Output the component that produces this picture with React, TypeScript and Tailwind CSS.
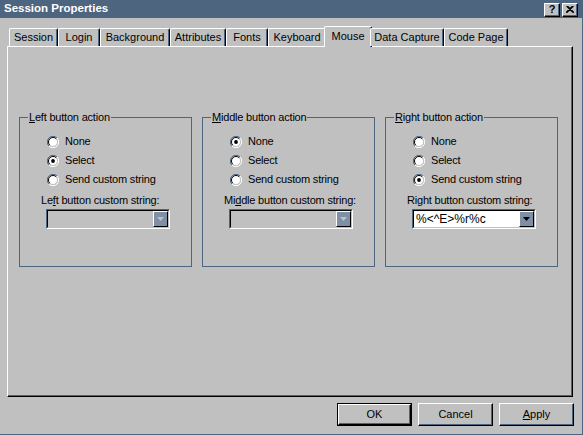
import React from "react";

const Radio = ({ checked }: { checked?: boolean }) => (
  <svg width="12" height="12" viewBox="0 0 12 12" className="shrink-0">
    <path d="M1.9 10.1 A5.8 5.8 0 0 1 10.1 1.9" fill="none" stroke="#4e6580" strokeWidth="1" />
    <path d="M10.1 1.9 A5.8 5.8 0 0 1 1.9 10.1" fill="none" stroke="#ffffff" strokeWidth="1" />
    <circle cx="6" cy="6" r="4.6" fill="#ffffff" />
    <path d="M2.8 9.2 A4.5 4.5 0 0 1 9.2 2.8" fill="none" stroke="#000000" strokeWidth="1" />
    <path d="M9.2 2.8 A4.5 4.5 0 0 1 2.8 9.2" fill="none" stroke="#c0c0c0" strokeWidth="1" />
    {checked && <circle cx="6" cy="6" r="1.9" fill="#000000" />}
  </svg>
);

const Option = ({ label, checked }: { label: string; checked?: boolean }) => (
  <div className="flex items-center h-[19px] gap-[6px]">
    <Radio checked={checked} />
    <span className="leading-[13px]">{label}</span>
  </div>
);

const Combo = ({ value, disabled }: { value?: string; disabled?: boolean }) => (
  <div
    className={`flex w-[124px] h-[20px] border border-t-[#4e6580] border-l-[#4e6580] border-r-white border-b-white ${
      disabled ? "bg-[#c0c0c0]" : "bg-white"
    }`}
  >
    <div className="flex flex-1 border border-t-black border-l-black border-r-[#c0c0c0] border-b-[#c0c0c0]">
      <div className="flex-1 flex items-center pl-[2px] text-[12px] tracking-normal leading-none text-black">{value}</div>
      <div className="w-[15px] flex items-center justify-center border border-t-white border-l-white border-r-black border-b-black bg-[#7d90a6]">
        <svg width="7" height="4" viewBox="0 0 7 4">
          <path d="M0 0 H7 L3.5 4 Z" fill={disabled ? "#c0c0c0" : "#000000"} />
        </svg>
      </div>
    </div>
  </div>
);

const Group = ({
  title,
  options,
  checkedIndex,
  comboLabel,
  comboValue,
  disabled,
}: {
  title: React.ReactNode;
  options: string[];
  checkedIndex: number;
  comboLabel: React.ReactNode;
  comboValue?: string;
  disabled?: boolean;
}) => (
  <div className="relative h-[150px] border border-[#4e6580] tracking-[-0.2px]">
    <span className="absolute left-[8px] top-[-7px] px-[1px] bg-[#c0c0c0] leading-[13px]">{title}</span>
    <div className="flex flex-col pt-[14px]">
      <div className="flex flex-col pl-[27px]">
        {options.map((o, i) => (
          <Option key={o} label={o} checked={i === checkedIndex} />
        ))}
      </div>
      <div className="pl-[21px] mt-[3px] h-[16px] flex items-center leading-[13px]">{comboLabel}</div>
      <div className="pl-[26px] mt-[1px]">
        <Combo value={comboValue} disabled={disabled} />
      </div>
    </div>
  </div>
);

const tabs: { name: string; w: string; selected?: boolean }[] = [
  { name: "Session", w: "w-[49px]" },
  { name: "Login", w: "w-[42px]" },
  { name: "Background", w: "w-[70px]" },
  { name: "Attributes", w: "w-[56px]" },
  { name: "Fonts", w: "w-[42px]" },
  { name: "Keyboard", w: "w-[58px]" },
  { name: "Mouse", w: "w-[48px]", selected: true },
  { name: "Data Capture", w: "w-[74px]" },
  { name: "Code Page", w: "w-[64px]" },
];

const Button = ({ children, def }: { children: React.ReactNode; def?: boolean }) => (
  <div className={`w-[75px] h-[23px] flex ${def ? "border border-black" : ""}`}>
    <div className="flex-1 flex items-center justify-center border border-t-white border-l-white border-r-black border-b-black shadow-[inset_-1px_-1px_0_#4e6580] bg-[#c0c0c0] leading-none">
      {children}
    </div>
  </div>
);

export default function App() {
  return (
    <div className="w-[583px] h-[435px] bg-[#c0c0c0] flex flex-col font-['Liberation_Sans',Arial,sans-serif] text-[11px] text-black border-b border-r border-b-[#4e6580] border-r-[#4e6580] overflow-hidden">
      <div className="h-[18px] bg-[#4e6580] flex items-center justify-between pl-[4px] pr-[4px]">
        <span className="text-white font-bold text-[11.5px] leading-none">Session Properties</span>
        <div className="flex gap-[2px] pt-[1px]">
          <div className="w-[16px] h-[14px] bg-[#c0c0c0] border border-t-white border-l-white border-r-black border-b-black shadow-[inset_-1px_-1px_0_#4e6580] flex items-center justify-center font-bold text-[11px] leading-none">
            ?
          </div>
          <div className="w-[16px] h-[14px] bg-[#c0c0c0] border border-t-white border-l-white border-r-black border-b-black shadow-[inset_-1px_-1px_0_#4e6580] flex items-center justify-center">
            <svg width="8" height="7" viewBox="0 0 8 7">
              <path d="M0.5 0 L7.5 7 M7.5 0 L0.5 7 M1.5 0 L8 6.5 M6.5 0 L0 6.5" stroke="#000" strokeWidth="1.1" />
            </svg>
          </div>
        </div>
      </div>

      <div className="relative z-10 mt-[8px] h-[20px] flex items-end pl-[9px]">
        {tabs.map((t) =>
          t.selected ? (
            <div
              key={t.name}
              className={`${t.w} h-[21px] -mx-[2px] -mb-[1px] bg-[#c0c0c0] border-t border-l border-r border-t-white border-l-white border-r-black shadow-[inset_-1px_0_0_#4e6580] rounded-t-[2px] flex items-start justify-center pt-[3px] leading-[13px]`}
            >
              {t.name}
            </div>
          ) : (
            <div
              key={t.name}
              className={`${t.w} h-[18px] bg-[#c0c0c0] border-t border-l border-r border-t-white border-l-white border-r-black shadow-[inset_-1px_0_0_#4e6580] rounded-t-[2px] flex items-center justify-center leading-[13px]`}
            >
              {t.name}
            </div>
          )
        )}
      </div>

      <div className="ml-[7px] w-[566px] h-[351px] border border-t-white border-l-white border-r-black border-b-black shadow-[inset_-1px_-1px_0_#4e6580] pl-[11px] pt-[70px]">
        <div className="grid grid-cols-[173px_173px_173px] gap-[10px]">
          <Group
            title={
              <>
                <span className="underline">L</span>eft button action
              </>
            }
            options={["None", "Select", "Send custom string"]}
            checkedIndex={1}
            comboLabel={
              <>
                Le<span className="underline">f</span>t button custom string:
              </>
            }
            disabled
          />
          <Group
            title={
              <>
                <span className="underline">M</span>iddle button action
              </>
            }
            options={["None", "Select", "Send custom string"]}
            checkedIndex={0}
            comboLabel={
              <>
                Mi<span className="underline">d</span>dle button custom string:
              </>
            }
            disabled
          />
          <Group
            title={
              <>
                <span className="underline">R</span>ight button action
              </>
            }
            options={["None", "Select", "Send custom string"]}
            checkedIndex={2}
            comboLabel={<>Right button custom string:</>}
            comboValue="%<^E>%r%c"
          />
        </div>
      </div>

      <div className="mt-[6px] flex justify-end gap-[6px] pr-[8px]">
        <Button def>OK</Button>
        <Button>Cancel</Button>
        <Button>
          <span>
            <span className="underline">A</span>pply
          </span>
        </Button>
      </div>
    </div>
  );
}
